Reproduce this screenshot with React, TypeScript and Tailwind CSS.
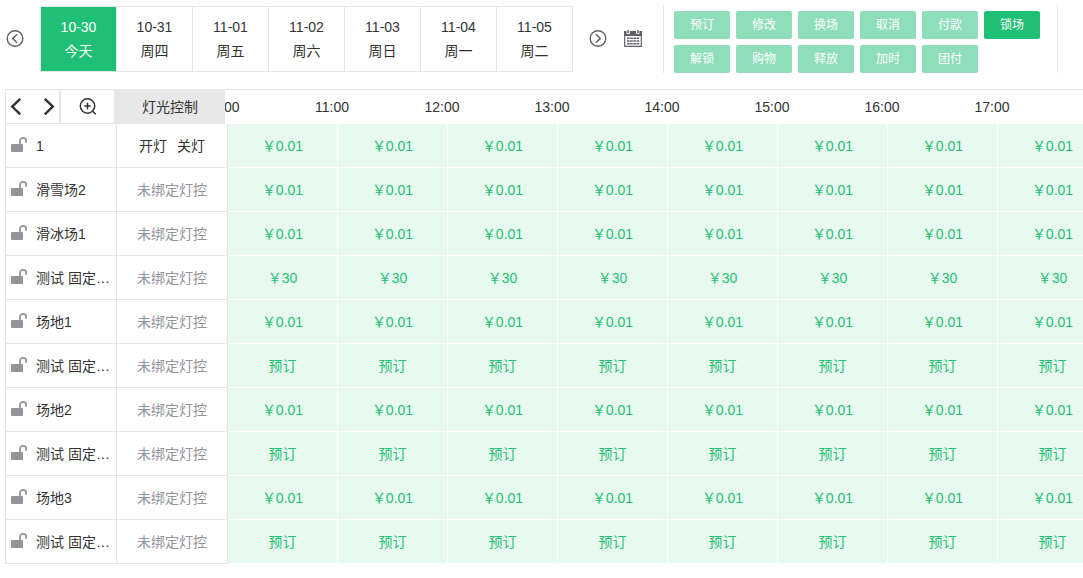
import React from "react";

const DAYS = [
  { date: "10-30", label: "今天" },
  { date: "10-31", label: "周四" },
  { date: "11-01", label: "周五" },
  { date: "11-02", label: "周六" },
  { date: "11-03", label: "周日" },
  { date: "11-04", label: "周一" },
  { date: "11-05", label: "周二" },
];

const ACTIONS = ["预订", "修改", "换场", "取消", "付款", "锁场", "解锁", "购物", "释放", "加时", "团付"];
const ACTIVE_ACTION = "锁场";

const HOURS = ["10:00", "11:00", "12:00", "13:00", "14:00", "15:00", "16:00", "17:00"];

const VENUES = [
  { name: "1", price: "￥0.01", bound: true },
  { name: "滑雪场2", price: "￥0.01", bound: false },
  { name: "滑冰场1", price: "￥0.01", bound: false },
  { name: "测试 固定场地", price: "￥30", bound: false },
  { name: "场地1", price: "￥0.01", bound: false },
  { name: "测试 固定场地", price: "预订", bound: false },
  { name: "场地2", price: "￥0.01", bound: false },
  { name: "测试 固定场地", price: "预订", bound: false },
  { name: "场地3", price: "￥0.01", bound: false },
  { name: "测试 固定场地", price: "预订", bound: false },
];

function CircleArrow({ direction }: { direction: "left" | "right" }) {
  return (
    <svg viewBox="0 0 18 18" className="block size-[18px]" fill="none" stroke="#606266" aria-hidden="true">
      <circle cx="9" cy="8.5" r="7.8" strokeWidth="1.4" />
      <path d={direction === "left" ? "M11 4.2 6.8 8.5l4.2 4.3" : "M7 4.2l4.2 4.3L7 12.8"} strokeWidth="1.5" />
    </svg>
  );
}

function CalendarIcon() {
  return (
    <svg viewBox="0 0 18 18" className="block size-[18px]" aria-hidden="true">
      <path d="M0.7 2h16.6v14.4H0.7z" fill="#fff" stroke="#606266" strokeWidth="1.2" />
      <path d="M0 1h18v5H0z" fill="#606266" />
      <path d="M2.6 0h3.2v4H2.6zM12.2 0h3.2v4h-3.2z" fill="#fff" />
      <path d="M3.4 0h1.4v3.2H3.4zM13.2 0h1.4v3.2h-1.4z" fill="#606266" />
      <path
        d="M3 7.6h2.6v1.5H3zM6.2 7.6h2.6v1.5H6.2zM9.4 7.6h2.6v1.5H9.4zM12.6 7.6h2.6v1.5h-2.6zM3 10.3h2.6v1.5H3zM6.2 10.3h2.6v1.5H6.2zM9.4 10.3h2.6v1.5H9.4zM12.6 10.3h2.6v1.5h-2.6zM3 13h2.6v1.5H3zM6.2 13h2.6v1.5H6.2zM9.4 13h2.6v1.5H9.4zM12.6 13h2.6v1.5h-2.6z"
        fill="#606266"
      />
    </svg>
  );
}

function Chevron({ direction }: { direction: "left" | "right" }) {
  return (
    <svg viewBox="0 0 12 18" className="block h-[18px] w-3" fill="none" stroke="#333" strokeWidth="2.4" aria-hidden="true">
      <path d={direction === "left" ? "M10.2 0.8 2.2 8.6l8 7.8" : "M1.8 0.8l8 7.8-8 7.8"} />
    </svg>
  );
}

function ZoomInIcon() {
  return (
    <svg viewBox="0 0 18 18" className="block size-[18px]" fill="none" stroke="#333" strokeWidth="1.5" aria-hidden="true">
      <circle cx="8.5" cy="8" r="7.2" />
      <path d="M8.5 4.8v6.4M5.3 8h6.4M13.6 13.2l3.2 3" />
    </svg>
  );
}

function UnlockIcon() {
  return (
    <svg viewBox="0 0 16 18" className="block h-[18px] w-4 shrink-0" aria-hidden="true">
      <rect x="0" y="7" width="12" height="8" rx="1" fill="#909399" />
      <path d="M9 8V4a3.1 3.1 0 0 1 6.2 0v1.8" fill="none" stroke="#909399" strokeWidth="1.8" />
    </svg>
  );
}

export default function App() {
  return (
    <main className="overflow-hidden bg-white font-['Liberation_Sans','Noto_Sans_CJK_SC',sans-serif] text-sm text-[#333]">
      <header className="flex items-start pt-[5px] pl-1.5">
        <div className="flex items-center pt-px">
          <button type="button" aria-label="前一周">
            <CircleArrow direction="left" />
          </button>
          <div className="ml-4 flex border border-[#e6e6e6]">
            {DAYS.map((day, i) => (
              <button
                key={day.date}
                type="button"
                className={
                  i === 0
                    ? "flex h-16 w-[75px] flex-col justify-center bg-[#1fbf75] leading-6 text-white"
                    : "flex h-16 w-[76px] flex-col justify-center border-l border-[#e6e6e6] leading-6"
                }
              >
                <span className="w-full">{day.date}</span>
                <span className="w-full">{day.label}</span>
              </button>
            ))}
          </div>
          <button type="button" aria-label="后一周" className="ml-4">
            <CircleArrow direction="right" />
          </button>
          <button type="button" aria-label="选择日期" className="ml-[17px]">
            <CalendarIcon />
          </button>
        </div>
        <div className="ml-[21px] grid h-[68px] grid-cols-[repeat(6,56px)] content-start gap-1.5 border-x border-[#e6e6e6] py-1.5 pr-[17px] pl-2.5">
          {ACTIONS.map((action) => (
            <button
              key={action}
              type="button"
              className={
                action === ACTIVE_ACTION
                  ? "h-7 rounded-xs bg-[#1fbf75] text-xs text-white"
                  : "h-7 rounded-xs bg-[#1fbf75] text-xs text-white opacity-50"
              }
            >
              {action}
            </button>
          ))}
        </div>
      </header>

      <section className="mt-4 ml-[5px] overflow-hidden">
        <div className="flex h-[35px] border-t border-[#e6e6e6]">
          <div className="flex w-[110px] shrink-0 border-b border-l border-[#e6e6e6]">
            <div className="flex w-[55px] items-center justify-between border-r-2 border-[#e6e6e6] px-1">
              <button type="button" aria-label="向左滚动">
                <Chevron direction="left" />
              </button>
              <button type="button" aria-label="向右滚动">
                <Chevron direction="right" />
              </button>
            </div>
            <button type="button" aria-label="放大" className="flex flex-1 items-center justify-center border-r border-[#e6e6e6]">
              <ZoomInIcon />
            </button>
          </div>
          <button type="button" className="w-[110px] shrink-0 bg-[#e8e8e8]">
            灯光控制
          </button>
          <div className="flex flex-1 items-center overflow-hidden">
            {HOURS.map((hour, i) => (
              <span
                key={hour}
                className={i === 0 ? "-ml-[58px] w-[110px] shrink-0 text-center" : "w-[110px] shrink-0 text-center"}
              >
                {hour}
              </span>
            ))}
          </div>
        </div>

        <table className="w-[1103px] table-fixed border-separate border-spacing-0 text-center">
          <colgroup>
            <col className="w-28" />
            <col className="w-[111px]" />
            {HOURS.map((hour) => (
              <col key={hour} className="w-[110px]" />
            ))}
          </colgroup>
          <tbody>
            {VENUES.map((venue, row) => (
              <tr key={row} className="h-11">
                <th scope="row" className="border-x border-b border-[#e6e6e6] p-0 font-normal">
                  <div className="flex items-center gap-[9px] pr-1 pl-[5px]">
                    <UnlockIcon />
                    <span className="truncate text-left leading-6">{venue.name}</span>
                  </div>
                </th>
                <td className="border-r border-b border-[#e6e6e6] p-0">
                  {venue.bound ? (
                    <div className="flex justify-center gap-2.5">
                      <button type="button">开灯</button>
                      <button type="button">关灯</button>
                    </div>
                  ) : (
                    <span className="text-[#909399]">未绑定灯控</span>
                  )}
                </td>
                {HOURS.map((hour) => (
                  <td key={hour} className="border-r border-b border-white bg-[#e8f9f0] p-0 text-[#1fbf75]">
                    <button type="button" className="h-[43px] w-full">
                      {venue.price}
                    </button>
                  </td>
                ))}
              </tr>
            ))}
          </tbody>
        </table>
      </section>
    </main>
  );
}
